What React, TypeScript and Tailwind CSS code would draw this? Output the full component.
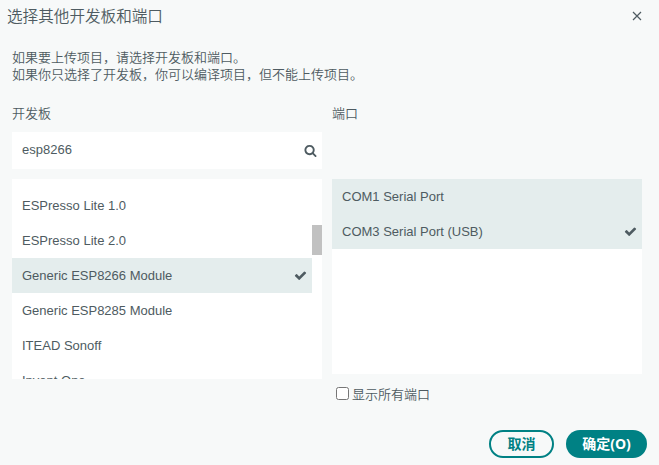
import React from "react";

const boards = [
  { name: "ESPresso Lite 1.0" },
  { name: "ESPresso Lite 2.0" },
  { name: "Generic ESP8266 Module", selected: true },
  { name: "Generic ESP8285 Module" },
  { name: "ITEAD Sonoff" },
  { name: "Invent One" },
];

function Check() {
  return (
    <svg viewBox="0 0 1792 1792" className="size-[13px] shrink-0 fill-[#4e5b61]">
      <path d="M1671 566q0 40-28 68l-724 724-136 136q-28 28-68 28t-68-28l-136-136-362-362q-28-28-28-68t28-68l136-136q28-28 68-28t68 28l294 295 656-657q28-28 68-28t68 28l136 136q28 28 28 68z" />
    </svg>
  );
}

function Search() {
  return (
    <svg viewBox="0 0 1792 1792" className="size-[13px] shrink-0 fill-[#4e5b61]">
      <path d="M1216 832q0-185-131.5-316.5t-316.5-131.5-316.5 131.5-131.5 316.5 131.5 316.5 316.5 131.5 316.5-131.5 131.5-316.5zm512 832q0 52-38 90t-90 38q-54 0-90-38l-343-342q-179 124-399 124-143 0-273.5-55.5t-225-150-150-225-55.5-273.5 55.5-273.5 150-225 225-150 273.5-55.5 273.5 55.5 225 150 150 225 55.5 273.5q0 220-124 399l343 343q37 37 37 90z" />
    </svg>
  );
}

function Row({ name, checked, active }: { name: string; checked?: boolean; active?: boolean }) {
  return (
    <div
      className={
        "flex h-[35px] shrink-0 items-center justify-between pr-[5px] pl-2.5 " +
        (active ? "bg-[#e4eded]" : "")
      }
    >
      <span>{name}</span>
      {checked && <Check />}
    </div>
  );
}

export default function App() {
  return (
    <div className="flex h-[465px] w-[659px] flex-col overflow-hidden bg-[#f7f9f9] font-['Liberation_Sans','Noto_Sans_CJK_SC',sans-serif] text-[13px] leading-[17px] font-[350] text-[#4e5b61]">
      <header className="flex h-8 shrink-0 items-center justify-between pr-[17px] pl-[7px]">
        <h1 className="text-[15.6px] font-[350]">选择其他开发板和端口</h1>
        <svg viewBox="0 0 10 10" className="size-2.5 fill-none stroke-[#4e5b61] stroke-[1.2]">
          <path d="M1 1L9 9M9 1L1 9" />
        </svg>
      </header>
      <div className="mt-[17px] ml-3 h-[34px] shrink-0">
        <p>如果要上传项目，请选择开发板和端口。</p>
        <p>如果你只选择了开发板，你可以编译项目，但不能上传项目。</p>
      </div>
      <main className="mt-[22px] ml-3 flex h-[299px] shrink-0 gap-2.5">
        <section className="w-[310px]">
          <h2 className="h-[27px] leading-[18px] font-[350]">开发板</h2>
          <div className="flex h-[37px] items-center justify-between bg-white pr-[5px] pl-2.5">
            <span className="pb-0.5">esp8266</span>
            <Search />
          </div>
          <div className="mt-2.5 flex h-[200px] overflow-hidden bg-white">
            <div className="flex w-[300px] flex-col pt-[9px]">
              {boards.map((b) => (
                <Row key={b.name} name={b.name} checked={b.selected} active={b.selected} />
              ))}
            </div>
            <div className="mt-[46px] h-[30px] w-2.5 bg-[#c1c1c1]" />
          </div>
        </section>
        <section className="w-[310px]">
          <h2 className="h-[74px] leading-[18px] font-[350]">端口</h2>
          <div className="h-[195px] bg-white">
            <Row name="COM1 Serial Port" active />
            <Row name="COM3 Serial Port (USB)" active checked />
          </div>
          <label className="mt-3 ml-1 flex items-center gap-[3px]">
            <span className="mb-0.5 size-[13px] rounded-[2.5px] border border-[#767676] bg-white" />
            <span>显示所有端口</span>
          </label>
        </section>
      </main>
      <footer className="mt-[26px] flex gap-3 pl-[489px] text-[14px] font-bold">
        <button className="h-7 w-[65px] rounded-full border-2 border-[#008184] text-[#008184]">取消</button>
        <button className="h-7 w-[81px] rounded-full bg-[#008184] pb-px font-['Open_Sans','Noto_Sans_CJK_SC',sans-serif] text-white">
          确定(O)
        </button>
      </footer>
    </div>
  );
}
